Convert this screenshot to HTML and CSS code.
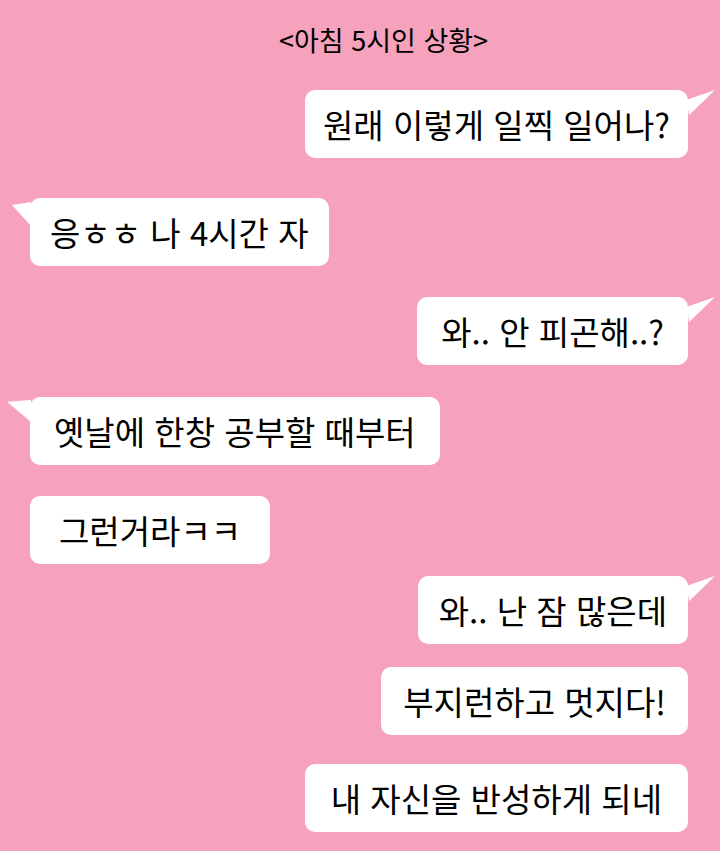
FILE: index.html
```html
<!DOCTYPE html>
<html lang="ko">
<head>
    <meta charset="UTF-8">
    <meta name="viewport" content="width=device-width, initial-scale=1.0">
    <title>아침 5시인 상황</title>
    <link rel="stylesheet" href="styles.css">
</head>
<body>
    <div class="chat">
        <div class="chat-title">&lt;아침 5시인 상황&gt;</div>

        <div class="msg me tail m1">원래 이렇게 일찍 일어나?</div>
        <div class="msg you tail tail-a m2">응ㅎㅎ 나 4시간 자</div>
        <div class="msg me tail m3">와.. 안 피곤해..?</div>
        <div class="msg you tail tail-b m4">옛날에 한창 공부할 때부터</div>
        <div class="msg you m5">그런거라ㅋㅋ</div>
        <div class="msg me tail m6">와.. 난 잠 많은데</div>
        <div class="msg me m7">부지런하고 멋지다!</div>
        <div class="msg me m8">내 자신을 반성하게 되네</div>
    </div>
</body>
</html>
```

FILE: styles.css
```css
html, body {
    margin: 0;
    padding: 0;
}
body {
    background-color: #f6a2bc;
    font-family: "Noto Sans CJK KR", "Noto Sans", sans-serif;
    color: #000;
    height: 851px;
    overflow: hidden;
}
.chat {
    display: flex;
    flex-direction: column;
    padding: 0 32px 0 30px;
}
.chat-title {
    align-self: center;
    margin: 24px 0 0 49px;
    font-size: 27px;
    line-height: 32px;
}
.msg {
    position: relative;
    background-color: white;
    border-radius: 10px;
    font-size: 33px;
    line-height: 68px;
    height: 68px;
    padding: 0 24px;
    white-space: nowrap;
}
.me {
    align-self: flex-end;
}
.you {
    align-self: flex-start;
}
.tail::after {
    content: "";
    position: absolute;
    background-color: white;
}
.me.tail::after {
    right: -27px;
    top: 0;
    width: 28px;
    height: 28px;
    clip-path: polygon(0 35%, 100% 0, 7% 90%);
}
.you.tail::after {
    left: -18px;
    top: 4px;
    width: 19px;
    height: 24px;
    clip-path: polygon(100% 0, 0 12%, 100% 100%);
}
.you.tail-b::after {
    left: -23px;
    top: 3px;
    width: 24px;
    height: 22px;
    clip-path: polygon(100% 0, 0 8%, 100% 100%);
}
.m1 { margin-top: 34px; padding: 0 18px; }
.m2 { margin-top: 40px; padding: 0 20px; }
.m3 { margin-top: 31px; }
.m4 { margin-top: 32px; }
.m5 { margin-top: 31px; padding: 0 29px; }
.m6 { margin-top: 12px; padding: 0 21px; }
.m7 { margin-top: 23px; padding: 0 22px; }
.m8 { margin-top: 29px; padding: 0 26px; }
```
